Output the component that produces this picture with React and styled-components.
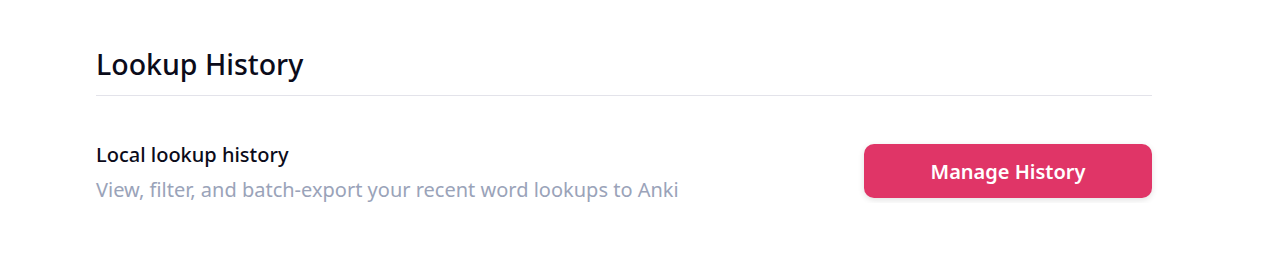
import React from 'react'
import styled, { createGlobalStyle } from 'styled-components'

const GlobalStyle = createGlobalStyle`
  body {
    margin: 0;
    background: #fff;
    font-family: 'Noto Sans', 'Open Sans', sans-serif;
  }
`

const Page = styled.main`
  padding: 45px 122px 0 96px;
`

const Title = styled.h2`
  margin: 0;
  padding-bottom: 12px;
  font-size: 28.5px;
  font-weight: 500;
  color: #0b0b1a;
  border-bottom: 1px solid #e3e3ea;
`

const Row = styled.div`
  display: flex;
  align-items: center;
  justify-content: space-between;
  padding-top: 45px;
`

const Text = styled.div`
  display: flex;
  flex-direction: column;
  gap: 8px;
`

const Label = styled.div`
  font-size: 20px;
  font-weight: 500;
  color: #0b0b1a;
`

const Description = styled.div`
  font-size: 20px;
  color: #9aa3b9;
`

const Button = styled.button`
  width: 288px;
  height: 54px;
  margin-bottom: 2px;
  border: none;
  border-radius: 10px;
  background: #e03567;
  color: #fff;
  font-family: inherit;
  font-size: 20px;
  font-weight: 600;
  box-shadow: 0 2px 6px rgba(0, 0, 0, 0.12);
  cursor: pointer;
`

export default function App () {
  return (
    <Page>
      <GlobalStyle />
      <Title>Lookup History</Title>
      <Row>
        <Text>
          <Label>Local lookup history</Label>
          <Description>View, filter, and batch-export your recent word lookups to Anki</Description>
        </Text>
        <Button>Manage History</Button>
      </Row>
    </Page>
  )
}
